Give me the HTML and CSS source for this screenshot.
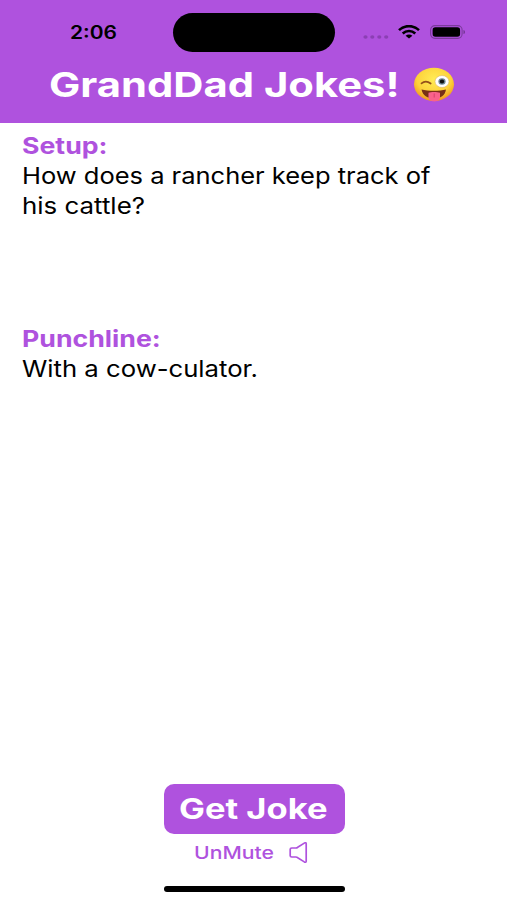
FILE: index.html
```html
<!DOCTYPE html>
<html lang="en">
<head>
<meta charset="utf-8">
<meta name="viewport" content="width=device-width, initial-scale=1">
<title>GrandDad Jokes</title>
<link rel="stylesheet" href="styles.css">
</head>
<body>
<div class="app">
  <header class="header">
    <div class="status">
      <span class="time wide">2:06</span>
      <span class="island"></span>
      <span class="indicators">
        <svg class="dots" width="28" height="6" viewBox="0 0 28 6" fill="#8b3fb4"><ellipse cx="3.5" cy="3" rx="2.1" ry="1.7"/><ellipse cx="10.3" cy="3" rx="2.1" ry="1.7"/><ellipse cx="17.3" cy="3" rx="2.1" ry="1.7"/><ellipse cx="24.2" cy="3" rx="2.1" ry="1.7"/></svg>
        <svg class="wifi" width="22" height="14" viewBox="0 0 22 14" fill="none" stroke="#000" stroke-width="2.6"><path d="M1 5.1C6.5-.2 15.500-.2 21 5.100M4.700 8.500C8.300 5.200 13.700 5.200 17.300 8.500"/><path d="M11 13.500 7.600 10.700C9.500 9 12.500 9 14.400 10.700Z" fill="#000" stroke="none"/></svg>
        <svg class="battery" width="36" height="14" viewBox="0 0 36 14"><rect x=".6" y=".6" width="31.500" height="12.800" rx="4.300" fill="none" stroke="#7b3a9c" stroke-width="1.100"/><rect x="2.600" y="2.200" width="27.500" height="9.600" rx="2.700"/><path d="M33.500 4.900C35.400 5.500 35.400 8.500 33.500 9.100Z" fill="#6f348d"/></svg>
      </span>
    </div>
    <div class="title-row">
      <h1 class="title wide">GrandDad Jokes!</h1>
      <svg class="emoji" width="42" height="36" viewBox="0 0 42 36">
        <defs>
          <radialGradient id="face" cx=".5" cy=".35" r=".65"><stop offset="0" stop-color="#ffec55"/><stop offset=".65" stop-color="#fdd33b"/><stop offset="1" stop-color="#ee971f"/></radialGradient>
        </defs>
        <ellipse cx="21" cy="17.300" rx="20" ry="16.600" fill="url(#face)"/>
        <path d="M8.500 22.400C15 24.200 26.500 24.200 33 22.400C32.200 28.300 27.500 31.300 21 31.300S9.600 28.300 8.500 22.400Z" fill="#783016"/>
        <path d="M15.500 25.800C18 24.600 24 24.600 27 25.800V30.500C26.500 35.700 16 35.700 15.500 30.500Z" fill="#f9628b"/>
        <path d="M21.200 26.500V30.500" stroke="#d93e6c" stroke-width="1"/>
        <path d="M8.500 16.400C11.500 13.700 14.500 14 17.700 16.500" fill="none" stroke="#94511a" stroke-width="1.700" stroke-linecap="round"/>
        <ellipse cx="29" cy="14.500" rx="7" ry="6" fill="#fff" stroke="#ddb36c" stroke-width=".6"/>
        <ellipse cx="29" cy="14.500" rx="3.600" ry="3.300" fill="#6e8794"/>
        <ellipse cx="29" cy="14.500" rx="2.200" ry="2" fill="#111"/>
      </svg>
    </div>
  </header>
  <main class="content">
    <section class="setup">
      <h2 class="label wide label-setup">Setup:</h2>
      <p class="line wide line-one">How does a rancher keep track of</p>
      <p class="line wide line-two">his cattle?</p>
    </section>
    <section>
      <h2 class="label wide label-punch">Punchline:</h2>
      <p class="line wide line-punch">With a cow-culator.</p>
    </section>
  </main>
  <footer class="footer">
    <button class="joke"><span class="wide joke-text">Get Joke</span></button>
    <button class="mute">
      <span class="wide mute-text">UnMute</span>
      <svg width="19" height="21" viewBox="0 0 19 21" fill="none" stroke="#af52de" stroke-width="1.700" stroke-linejoin="round"><path d="M1.200 7.300Q1.200 6 2.700 6H6.800Q7.900 6 8.700 5.300L15.300 1.100Q17.200.200 17.200 1.700V19.300Q17.200 20.800 15.300 19.900L8.700 15.700Q7.900 15 6.800 15H2.700Q1.200 15 1.200 13.700Z"/></svg>
    </button>
    <div class="home"></div>
  </footer>
</div>
</body>
</html>
```
FILE: styles.css
```css
* { box-sizing: border-box; margin: 0; padding: 0; }
body { background: #fff; font-family: Inter, "Liberation Sans", sans-serif; color: #000; }
.app { width: 507px; height: 900px; display: flex; flex-direction: column; overflow: hidden; }
.wide { display: block; white-space: nowrap; transform-origin: left center; transform: scaleX(1.15); }
.header { height: 123px; background: #af52de; flex: none; }
.status { height: 64px; display: grid; grid-template-columns: 173px 162px 1fr; align-items: center; }
.time { margin-left: 69.500px; font-size: 18px; font-weight: 600; transform: scaleX(1.165); }
.island { height: 39px; border-radius: 20px; background: #000; }
.indicators { display: flex; align-items: center; padding-left: 27px; }
.dots { margin-top: 9px; }
.wifi { margin-left: 8px; }
.battery { margin-left: 10px; }
.title-row { display: flex; align-items: center; height: 42px; padding-left: 49px; }
.title { width: 364px; font-size: 34px; font-weight: 700; line-height: 42px; color: #fff; transform: scaleX(1.228); }
.emoji { flex: none; }
.content { flex: 1; padding: 8px 0 0 22px; }
.label { color: #af52de; font-size: 23px; font-weight: 700; line-height: 30px; transform: scaleX(1.16); }
.line { font-size: 23px; line-height: 30px; }
.line-one { transform: scaleX(1.108); }
.line-two { transform: scaleX(1.125); }
.line-punch { transform: scaleX(1.117); }
.setup { height: 193px; }
.footer { display: flex; flex-direction: column; align-items: center; height: 116px; }
button { border: 0; background: none; font-family: inherit; }
.joke { width: 181px; height: 50px; border-radius: 10px; background: #af52de; color: #fff; padding-left: 15px; text-align: left; margin-left: 1px; }
.joke-text { font-size: 28px; font-weight: 700; line-height: 50px; transform: scaleX(1.233); }
.mute { display: flex; align-items: center; width: 120px; height: 36px; color: #af52de; }
.mute-text { width: 95px; text-align: left; font-size: 17.5px; font-weight: 500; transform: scaleX(1.21); }
.mute svg { flex: none; }
.home { width: 181px; height: 6px; margin: 16px 0 0 1px; border-radius: 3px; background: #000; }
```
